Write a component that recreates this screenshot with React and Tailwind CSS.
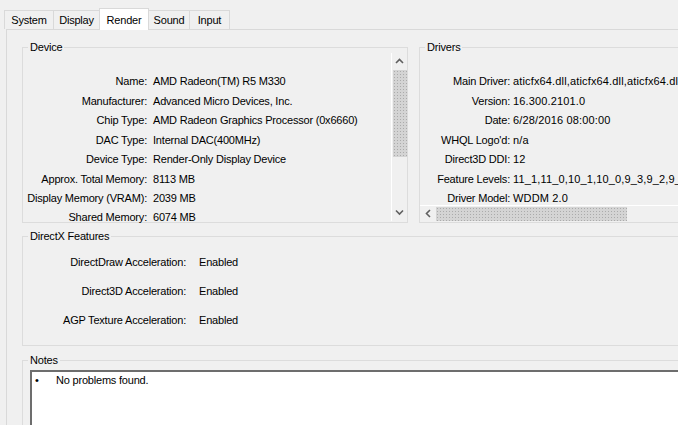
import React from 'react';

const device = [
    ['Name:', 'AMD Radeon(TM) R5 M330'],
    ['Manufacturer:', 'Advanced Micro Devices, Inc.'],
    ['Chip Type:', 'AMD Radeon Graphics Processor (0x6660)'],
    ['DAC Type:', 'Internal DAC(400MHz)'],
    ['Device Type:', 'Render-Only Display Device'],
    ['Approx. Total Memory:', '8113 MB'],
    ['Display Memory (VRAM):', '2039 MB'],
    ['Shared Memory:', '6074 MB'],
];

const drivers = [
    ['Main Driver:', 'aticfx64.dll,aticfx64.dll,aticfx64.dll,amdxc64.dll'],
    ['Version:', '16.300.2101.0'],
    ['Date:', '6/28/2016 08:00:00'],
    ["WHQL Logo'd:", 'n/a'],
    ['Direct3D DDI:', '12'],
    ['Feature Levels:', '11_1,11_0,10_1,10_0,9_3,9_2,9_1'],
    ['Driver Model:', 'WDDM 2.0'],
];

const features = [
    ['DirectDraw Acceleration:', 'Enabled'],
    ['Direct3D Acceleration:', 'Enabled'],
    ['AGP Texture Acceleration:', 'Enabled'],
];

const tabs = [
    { name: 'System', w: 'w-[50px]' },
    { name: 'Display', w: 'w-[47px]' },
    { name: 'Render', w: 'w-[50px]' },
    { name: 'Sound', w: 'w-[42px]' },
    { name: 'Input', w: 'w-[41px]' },
];

const thumb = 'bg-[#d4d4d4] bg-[radial-gradient(#ababab_0.7px,transparent_0.8px)] bg-[length:3px_3px]';

const Chevron = ({ dir }) => {
    const pts = {
        up: '1,5 4.5,1.5 8,5',
        down: '1,1.5 4.5,5 8,1.5',
        left: '5,1 1.5,4.5 5,8',
    }[dir];
    const size = dir === 'left' ? 'w-[7px] h-[9px]' : 'w-[9px] h-[7px]';
    return (
        <svg viewBox={dir === 'left' ? '0 0 7 9' : '0 0 9 7'} className={size}>
            <polyline points={pts} fill="none" stroke="#606060" strokeWidth="1.6" />
        </svg>
    );
};

const GroupBox = ({ title, className, children }) => (
    <fieldset className={`border border-[#dcdcdc] ${className}`}>
        <legend className="ml-[5px] px-[2px] leading-[13px]">{title}</legend>
        {children}
    </fieldset>
);

export default function App() {
    return (
        <div className="w-[678px] h-[425px] overflow-hidden bg-[#f0f0f0] text-[11px] tracking-[-0.2px] text-black font-['Liberation_Sans',Arial,sans-serif]">
            {/* TABS */}
            <div className="flex items-end h-[29px] pl-[4px]">
                {tabs.map((t, i) => (
                    t.name === 'Render' ? (
                        <div key={t.name} className={`${t.w} h-[22px] -mb-px -ml-px bg-white border border-b-0 border-[#d9d9d9] flex items-start justify-center pt-[3px] relative z-10`}>
                            {t.name}
                        </div>
                    ) : (
                        <div key={t.name} className={`${t.w} h-[19px] bg-[#f0f0f0] border border-b-0 border-[#d9d9d9] flex items-center justify-center ${i > 0 ? '-ml-px' : ''}`}>
                            {t.name}
                        </div>
                    )
                ))}
            </div>

            {/* PANEL */}
            <div className="ml-[6px] w-[760px] h-[400px] border-l border-t border-[#d9d9d9] pl-[15px] pt-[11px]">
                <div className="flex gap-[11px]">
                    {/* DEVICE */}
                    <GroupBox title="Device" className="w-[386px] h-[182px]">
                        <div className="flex h-[168px] -mt-px">
                            <div className="flex-1 pt-[19px] grid grid-cols-[124px_1fr] gap-x-[6px] auto-rows-[19.43px] items-center whitespace-nowrap">
                                {device.map(([k, v]) => (
                                    <React.Fragment key={k}>
                                        <span className="text-right">{k}</span>
                                        <span>{v}</span>
                                    </React.Fragment>
                                ))}
                            </div>
                            <div className="w-[16px] border-l border-white flex flex-col items-center">
                                <div className="h-[17px] flex items-center justify-center"><Chevron dir="up" /></div>
                                <div className={`w-[14px] h-[87px] ${thumb}`} />
                                <div className="flex-1" />
                                <div className="h-[17px] flex items-center justify-center"><Chevron dir="down" /></div>
                            </div>
                        </div>
                    </GroupBox>

                    {/* DRIVERS */}
                    <GroupBox title="Drivers" className="w-[320px] h-[182px]">
                        <div className="flex flex-col h-[168px] -mt-px">
                            <div className="flex-1 pt-[19px] grid grid-cols-[90px_1fr] gap-x-[3px] auto-rows-[19.43px] items-center whitespace-nowrap overflow-hidden">
                                {drivers.map(([k, v]) => (
                                    <React.Fragment key={k}>
                                        <span className="text-right">{k}</span>
                                        <span className="tracking-[0.15px]">{v}</span>
                                    </React.Fragment>
                                ))}
                            </div>
                            <div className="h-[16px] border-t border-white flex items-center">
                                <div className="w-[16px] flex items-center justify-center"><Chevron dir="left" /></div>
                                <div className={`w-[191px] h-[14px] ${thumb}`} />
                            </div>
                        </div>
                    </GroupBox>
                </div>

                {/* DIRECTX FEATURES */}
                <GroupBox title="DirectX Features" className="mt-[7px] w-[720px] h-[116px]">
                    <div className="pt-[5px] grid grid-cols-[163px_1fr] gap-x-[13px] auto-rows-[29px] items-center">
                        {features.map(([k, v]) => (
                            <React.Fragment key={k}>
                                <span className="text-right">{k}</span>
                                <span>{v}</span>
                            </React.Fragment>
                        ))}
                    </div>
                </GroupBox>

                {/* NOTES */}
                <GroupBox title="Notes" className="mt-[8px] w-[720px] h-[120px]">
                    <div className="ml-[7px] mt-[3px] h-[100px] bg-white border-l-2 border-t-2 border-l-[#6d6d6d] border-t-[#6d6d6d] flex items-start">
                        <span className="w-[24px] pl-[3px]">•</span>
                        <span>No problems found.</span>
                    </div>
                </GroupBox>
            </div>
        </div>
    );
}
